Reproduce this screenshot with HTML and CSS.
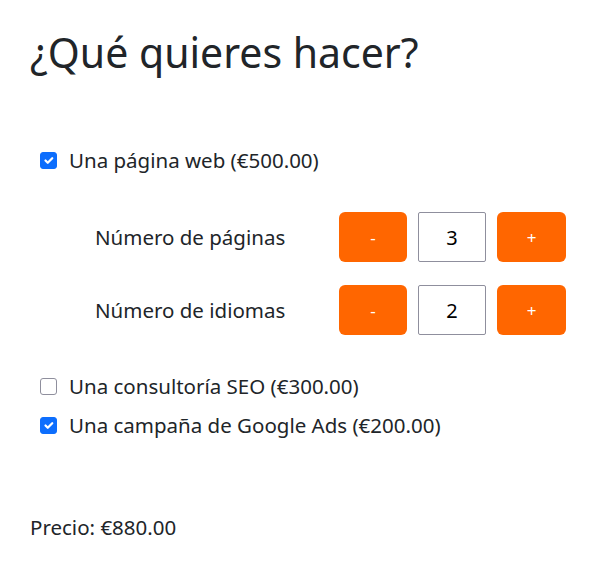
FILE: index.html
```html
<!DOCTYPE html>
<html lang="es">
<head>
<meta charset="utf-8">
<title>¿Qué quieres hacer?</title>
<link rel="stylesheet" href="styles.css">
</head>
<body>
<main class="page">
  <h1 class="title">¿Qué quieres hacer?</h1>

  <section class="options">
    <label class="check">
      <input type="checkbox" class="check-input" checked>
      <span>Una página web (€500.00)</span>
    </label>

    <div class="panel">
      <div class="counter">
        <span class="counter-label">Número de páginas</span>
        <button class="btn">-</button>
        <input class="count" type="text" value="3">
        <button class="btn">+</button>
      </div>
      <div class="counter">
        <span class="counter-label">Número de idiomas</span>
        <button class="btn">-</button>
        <input class="count" type="text" value="2">
        <button class="btn">+</button>
      </div>
    </div>

    <label class="check">
      <input type="checkbox" class="check-input">
      <span>Una consultoría SEO (€300.00)</span>
    </label>
    <label class="check check-last">
      <input type="checkbox" class="check-input" checked>
      <span>Una campaña de Google Ads (€200.00)</span>
    </label>
  </section>

  <p class="price">Precio: €880.00</p>
</main>
</body>
</html>
```

FILE: styles.css
```css
* { box-sizing: border-box; }

html, body {
  margin: 0;
  padding: 0;
  background: #fff;
}

body {
  font-family: "Noto Sans", "Open Sans", sans-serif;
  color: #212529;
}

.page {
  padding: 28px 30px 0 30px;
}

.title {
  margin: 0;
  font-size: 41px;
  font-weight: 400;
  line-height: 48px;
}

.options {
  margin-top: 69px;
  display: flex;
  flex-direction: column;
}

.check {
  display: flex;
  align-items: center;
  gap: 12px;
  padding-left: 10px;
  height: 30px;
  font-size: 20.5px;
}

.check + .check {
  margin-top: 9px;
}

.check-input {
  appearance: none;
  -webkit-appearance: none;
  margin: 0;
  width: 17px;
  height: 17px;
  border: 1px solid #8f8f9d;
  border-radius: 3px;
  background: #fff;
  flex: none;
}

.check-input:checked {
  background-color: #0d6efd;
  border-color: #0d6efd;
  background-image: url("data:image/svg+xml,%3csvg xmlns='http://www.w3.org/2000/svg' viewBox='0 0 20 20'%3e%3cpath fill='none' stroke='%23fff' stroke-linecap='round' stroke-linejoin='round' stroke-width='3' d='m6 10 3 3 6-6'/%3e%3c/svg%3e");
  background-size: 100% 100%;
}

.panel {
  display: flex;
  flex-direction: column;
  gap: 23px;
  padding-left: 65px;
  margin: 37px 0 36px;
}

.counter {
  display: grid;
  grid-template-columns: 233px 68px 68px 69px;
  column-gap: 11px;
  align-items: center;
  height: 50px;
  font-size: 20.5px;
}

.btn {
  height: 50px;
  border: 0;
  border-radius: 6px;
  background: #ff6600;
  color: #fff;
  font-family: inherit;
  font-size: 17px;
  padding: 0;
}

.count {
  width: 68px;
  height: 50px;
  border: 1px solid #8f8f9d;
  border-radius: 2px;
  text-align: center;
  font-family: inherit;
  font-size: 20px;
  color: #000;
  padding: 0;
}

.price {
  margin: 72px 0 0;
  line-height: 30px;
  font-size: 20.5px;
}
```
